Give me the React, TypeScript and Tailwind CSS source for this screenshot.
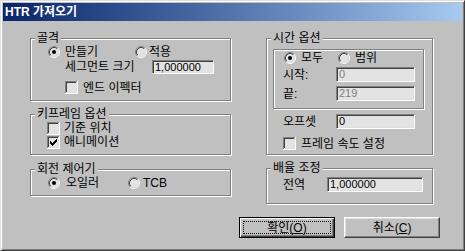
import React from "react";

// classic sunken radio, 12x12
function RadioDot({ checked }: { checked?: boolean }) {
  return (
    <svg width="12" height="12" viewBox="0 0 12 12" className="shrink-0">
      <circle cx="6" cy="6" r="4.5" fill="#e3e3e3" />
      <path d="M2.11 9.89 A5.5 5.5 0 0 1 9.89 2.11" fill="none" stroke="#808080" strokeWidth="1" />
      <path d="M9.89 2.11 A5.5 5.5 0 0 1 2.11 9.89" fill="none" stroke="#ffffff" strokeWidth="1" />
      <path d="M2.82 9.18 A4.5 4.5 0 0 1 9.18 2.82" fill="none" stroke="#404040" strokeWidth="1" />
      <path d="M9.18 2.82 A4.5 4.5 0 0 1 2.82 9.18" fill="none" stroke="#dfdfdf" strokeWidth="1" />
      {checked && <circle cx="6" cy="6" r="2" fill="#000" />}
    </svg>
  );
}

// classic sunken checkbox, 13x13
function CheckBox({ checked }: { checked?: boolean }) {
  return (
    <svg width="13" height="13" viewBox="0 0 13 13" className="shrink-0" shapeRendering="crispEdges">
      <rect x="0" y="0" width="13" height="13" fill="#ffffff" />
      <rect x="0" y="0" width="12" height="1" fill="#808080" />
      <rect x="0" y="0" width="1" height="12" fill="#808080" />
      <rect x="1" y="1" width="11" height="11" fill="#dfdfdf" />
      <rect x="1" y="1" width="10" height="1" fill="#404040" />
      <rect x="1" y="1" width="1" height="10" fill="#404040" />
      <rect x="2" y="2" width="9" height="9" fill="#e3e3e3" />
      {checked && (
        <path
          fill="#000"
          d="M9 3h1v1H9zM8 4h2v1H8zM3 5h1v1H3zM7 5h3v1H7zM3 6h2v1H3zM6 6h3v1H6zM3 7h5v1H3zM4 8h3v1H4zM5 9h1v1H5z"
        />
      )}
    </svg>
  );
}

function Field({ value, width, disabled }: { value: string; width: string; disabled?: boolean }) {
  return (
    <div
      className={`${width} h-full bg-[#e3e3e3] border border-t-[#808080] border-l-[#808080] border-r-white border-b-white shadow-[inset_1px_1px_0_#404040,inset_-1px_-1px_0_#dfdfdf] pl-[2px] flex items-center text-[11px] leading-none ${
        disabled ? "text-[#808080]" : "text-black"
      }`}
    >
      {value}
    </div>
  );
}

function Group({ title, children, className }: { title: string; children: React.ReactNode; className?: string }) {
  return (
    <fieldset
      className={`border border-[#808080] shadow-[inset_1px_1px_0_#fff,1px_1px_0_#fff] ${className ?? ""}`}
    >
      <legend className="ml-[4px] px-[2px] bg-[#c0c0c0] text-[12px] leading-[13px] h-[13px]">{title}</legend>
      {children}
    </fieldset>
  );
}

export default function App() {
  return (
    <div className="w-[465px] h-[251px] bg-[#c0c0c0] border border-t-[#dfdfdf] border-l-[#dfdfdf] border-r-[#404040] border-b-[#404040] shadow-[inset_1px_1px_0_#fff,inset_-1px_-1px_0_#808080] p-[2px] flex flex-col text-black font-['Liberation_Sans','Noto_Sans_CJK_KR',sans-serif]">
      {/* Title bar */}
      <div className="h-[18px] shrink-0 bg-gradient-to-r from-[#0a246a] to-[#a6caf0] pl-[2px] flex items-center text-white font-bold text-[12px] leading-none">
        HTR 가져오기
      </div>

      <div className="flex items-start pl-[27px] mt-[11px]">
        {/* Left column */}
        <div className="w-[201px] flex flex-col">
          <Group title="골격">
            <div className="flex flex-col pb-[6px] text-[12px] leading-none">
              <div className="h-[13px] flex items-center pl-[17px]">
                <div className="w-[87px] flex items-center gap-[5px]">
                  <RadioDot checked />
                  <span>만들기</span>
                </div>
                <div className="flex items-center gap-[2px]">
                  <RadioDot />
                  <span>적용</span>
                </div>
              </div>
              <div className="mt-[2px] h-[14px] flex items-center pl-[34px]">
                <span className="w-[87px]">세그먼트 크기</span>
                <Field value="1,000000" width="w-[62px]" />
              </div>
              <div className="mt-[7px] h-[13px] flex items-center gap-[5px] pl-[34px]">
                <CheckBox />
                <span>엔드 이펙터</span>
              </div>
            </div>
          </Group>

          <Group title="키프레임 옵션" className="mt-[7px]">
            <div className="flex flex-col pb-[5px] text-[12px] leading-none">
              <div className="h-[14px] flex items-center gap-[4px] pl-[16px]">
                <CheckBox />
                <span>기준 위치</span>
              </div>
              <div className="h-[14px] flex items-center gap-[4px] pl-[16px]">
                <CheckBox checked />
                <span>애니메이션</span>
              </div>
            </div>
          </Group>

          <Group title="회전 제어기" className="mt-[8px]">
            <div className="flex flex-col pb-[6px] text-[12px] leading-none">
              <div className="h-[13px] flex items-center pl-[17px]">
                <div className="w-[80px] flex items-center gap-[6px]">
                  <RadioDot checked />
                  <span>오일러</span>
                </div>
                <div className="flex items-center gap-[3px]">
                  <RadioDot />
                  <span>TCB</span>
                </div>
              </div>
            </div>
          </Group>
        </div>

        {/* Right column */}
        <div className="ml-[35px] w-[167px] flex flex-col">
          <Group title="시간 옵션">
            <div className="flex flex-col pb-[4px] text-[12px] leading-none">
              <div className="mt-[4px] ml-[6px] w-[151px] border border-[#808080] shadow-[inset_1px_1px_0_#fff,1px_1px_0_#fff] flex flex-col pb-[7px]">
                <div className="mt-[1px] h-[13px] flex items-center pl-[10px]">
                  <div className="w-[54px] flex items-center gap-[5px]">
                    <RadioDot checked />
                    <span>모두</span>
                  </div>
                  <div className="flex items-center gap-[5px]">
                    <RadioDot />
                    <span>범위</span>
                  </div>
                </div>
                <div className="mt-[3px] h-[15px] flex items-center pl-[9px]">
                  <span className="w-[53px]">시작:</span>
                  <Field value="0" width="w-[79px]" disabled />
                </div>
                <div className="mt-[4px] h-[15px] flex items-center pl-[9px]">
                  <span className="w-[53px]">끝:</span>
                  <Field value="219" width="w-[79px]" disabled />
                </div>
              </div>
              <div className="mt-[5px] h-[15px] flex items-center pl-[16px]">
                <span className="w-[53px]">오프셋</span>
                <Field value="0" width="w-[79px]" />
              </div>
              <div className="mt-[8px] h-[13px] flex items-center gap-[5px] pl-[16px]">
                <CheckBox />
                <span>프레임 속도 설정</span>
              </div>
            </div>
          </Group>

          <Group title="배율 조정" className="mt-[7px]">
            <div className="flex flex-col pb-[11px] text-[12px] leading-none">
              <div className="mt-[2px] h-[15px] flex items-center pl-[16px]">
                <span className="w-[44px]">전역</span>
                <Field value="1,000000" width="w-[96px]" />
              </div>
            </div>
          </Group>
        </div>
      </div>

      {/* Buttons */}
      <div className="mt-[13px] flex gap-[9px] pl-[236px] text-[12px] leading-none">
        <button className="w-[96px] h-[21px] border border-black shadow-[inset_1px_1px_0_#fff,inset_-1px_-1px_0_#404040,inset_-2px_-2px_0_#808080] p-[3px] flex">
          <span className="flex-1 border border-dotted border-black flex items-center justify-center">
            확인(<span className="underline">O</span>)
          </span>
        </button>
        <button className="w-[96px] h-[21px] border border-t-white border-l-white border-r-[#404040] border-b-[#404040] shadow-[inset_-1px_-1px_0_#808080,inset_1px_1px_0_#dfdfdf] flex items-center justify-center">
          취소(<span className="underline">C</span>)
        </button>
      </div>
    </div>
  );
}
